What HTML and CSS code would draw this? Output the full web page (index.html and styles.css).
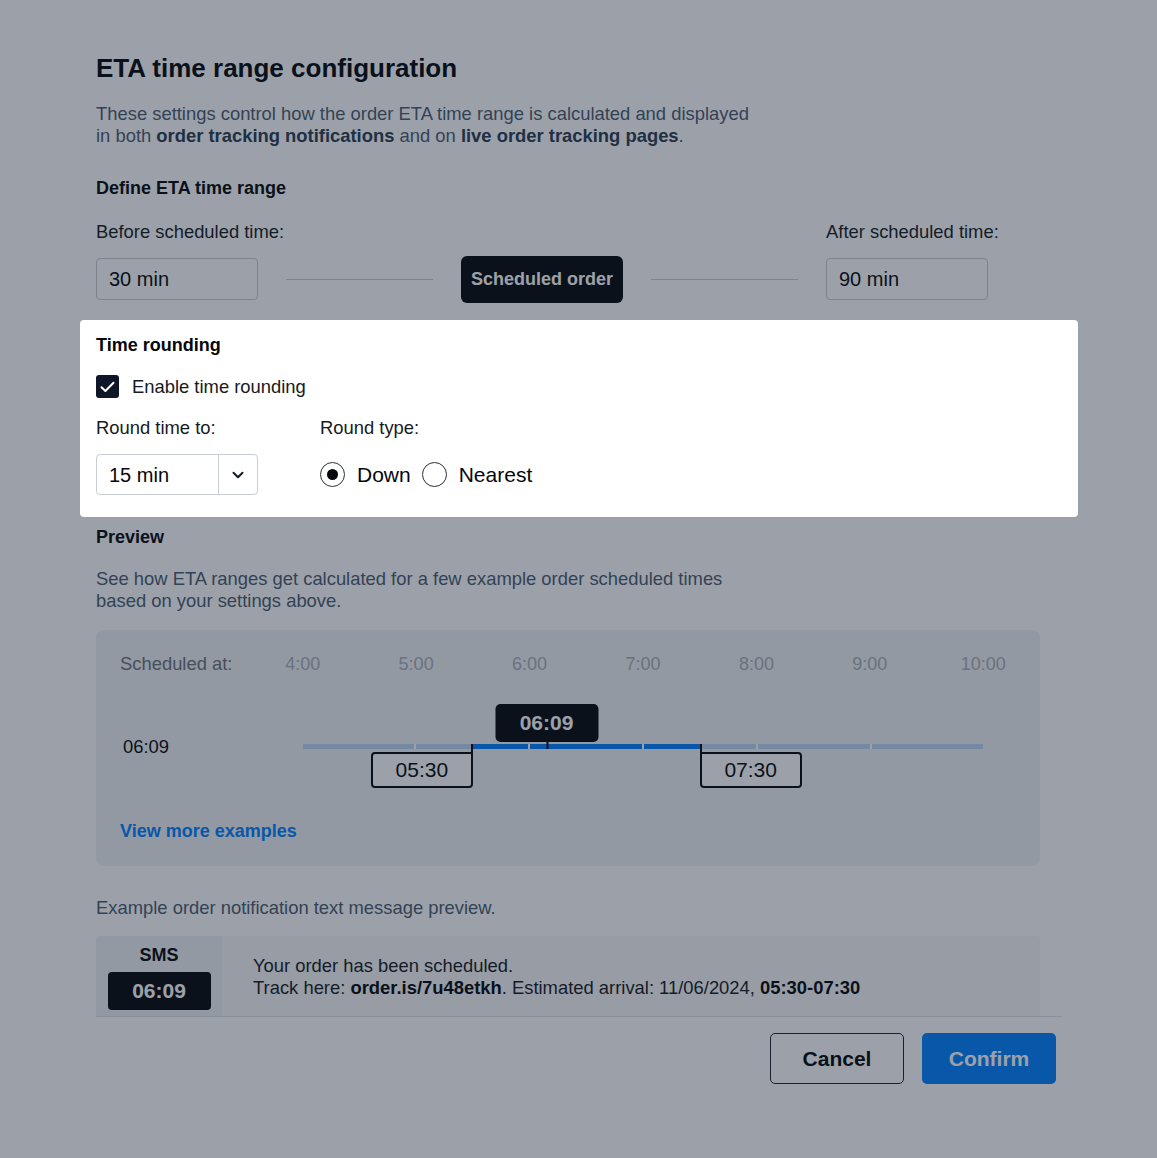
FILE: index.html
```html
<!DOCTYPE html>
<html lang="en">
<head>
  <meta charset="UTF-8" />
  <meta name="viewport" content="width=device-width, initial-scale=1.0" />
  <title>ETA time range configuration</title>
  <link rel="stylesheet" href="styles.css">
</head>
<body>
  <div class="modal">
    <h1 class="modal-title">ETA time range configuration</h1>
    <p class="intro">
      These settings control how the order ETA time range is calculated and displayed<br>
      in both <strong>order tracking notifications</strong> and on <strong>live order tracking pages</strong>.
    </p>

    <section class="range">
      <h2 class="section-title">Define ETA time range</h2>
      <div class="range-row">
        <div class="field">
          <label class="label" for="before">Before scheduled time:</label>
          <input class="text-input" id="before" type="text" value="30 min" />
        </div>
        <div class="range-link">
          <span class="rule"></span>
          <span class="anchor">Scheduled order</span>
          <span class="rule"></span>
        </div>
        <div class="field">
          <label class="label" for="after">After scheduled time:</label>
          <input class="text-input" id="after" type="text" value="90 min" />
        </div>
      </div>
    </section>

    <section class="rounding">
      <h2 class="section-title">Time rounding</h2>
      <label class="check">
        <span class="check-box">
          <svg width="15" height="12" viewBox="0 0 15 12"><path d="M1.5 6.2 5.4 10 13.5 1.8" fill="none" stroke="#fff" stroke-width="2" stroke-linecap="round" stroke-linejoin="round"/></svg>
        </span>
        Enable time rounding
      </label>
      <div class="rounding-row">
        <div class="field">
          <span class="label">Round time to:</span>
          <div class="select">
            <span class="select-value">15 min</span>
            <span class="select-caret">
              <svg width="12" height="8" viewBox="0 0 12 8"><path d="M1.5 1.8 6 6.2 10.5 1.8" fill="none" stroke="#111827" stroke-width="2" stroke-linecap="round" stroke-linejoin="round"/></svg>
            </span>
          </div>
        </div>
        <div class="field field-wide">
          <span class="label">Round type:</span>
          <div class="radios">
            <label class="radio"><span class="radio-dot is-on"></span>Down</label>
            <label class="radio"><span class="radio-dot"></span>Nearest</label>
          </div>
        </div>
      </div>
    </section>

    <section class="preview">
      <h2 class="section-title">Preview</h2>
      <p class="hint">
        See how ETA ranges get calculated for a few example order scheduled times<br>
        based on your settings above.
      </p>

      <div class="timeline-card">
        <div class="timeline-grid">
          <span class="timeline-label">Scheduled at:</span>
          <span class="hour">4:00</span>
          <span class="hour">5:00</span>
          <span class="hour">6:00</span>
          <span class="hour">7:00</span>
          <span class="hour">8:00</span>
          <span class="hour">9:00</span>
          <span class="hour">10:00</span>

          <span class="row-time">06:09</span>
          <div class="track-cell">
            <div class="track">
              <span class="seg"></span>
              <span class="seg seg-start"></span>
              <span class="seg seg-on"></span>
              <span class="seg seg-end"></span>
              <span class="seg"></span>
              <span class="seg"></span>

              <span class="marker marker-now" style="left: 35.83%">06:09</span>
              <span class="marker marker-from" style="right: 75%">05:30</span>
              <span class="marker marker-to" style="left: 58.33%">07:30</span>
            </div>
          </div>
        </div>
        <a class="more-link" href="#">View more examples</a>
      </div>

      <p class="hint sms-hint">Example order notification text message preview.</p>
      <div class="sms">
        <div class="sms-side">
          <span class="sms-tag">SMS</span>
          <span class="sms-time">06:09</span>
        </div>
        <div class="sms-body">
          <p>Your order has been scheduled.</p>
          <p>Track here: <strong>order.is/7u48etkh</strong>. Estimated arrival: 11/06/2024, <strong>05:30-07:30</strong></p>
        </div>
      </div>
    </section>

    <footer class="modal-footer">
      <button class="btn btn-ghost">Cancel</button>
      <button class="btn btn-primary">Confirm</button>
    </footer>
  </div>
</body>
</html>
```

FILE: styles.css
```css
:root {
  --ink: #05070c;
  --ink-soft: #161a22;
  --slate: #4b5c70;
  --slate-strong: #2a3c52;
  --muted: #6b717b;
  --faint: #a9aeb6;
  --line: #c8cdd5;
  --blue: #0080ff;
  --blue-light: #bcd6f4;
  --panel: #f0f1f3;
  --dim: rgba(20, 30, 50, 0.42);
}

* {
  box-sizing: border-box;
  margin: 0;
  padding: 0;
}

body {
  font-family: 'Liberation Sans', Arial, sans-serif;
  font-size: 18.4px;
  line-height: 22px;
  color: var(--ink);
  background: #fff;
}

.modal {
  width: 1157px;
  min-height: 1158px;
  padding: 52px 95px 0 96px;
}

.modal-title {
  font-size: 26px;
  line-height: 32px;
  font-weight: bold;
}

.intro {
  margin-top: 19px;
  color: var(--slate);
}

.intro strong {
  color: var(--slate-strong);
}

.section-title {
  font-size: 18px;
  line-height: 22px;
  font-weight: bold;
}

.range {
  margin-top: 30px;
}

.label {
  display: block;
  color: var(--ink-soft);
  margin-bottom: 15px;
  white-space: nowrap;
}

.range-row {
  display: flex;
  align-items: flex-end;
  gap: 28px;
  width: 892px;
  margin-top: 22px;
}

.field {
  display: flex;
  flex-direction: column;
  width: 162px;
  flex-shrink: 0;
}

.field-wide {
  width: auto;
}

.text-input {
  width: 162px;
  height: 42px;
  padding: 0 12px;
  font: inherit;
  font-size: 20px;
  color: var(--ink);
  border: 1px solid var(--line);
  border-radius: 4px;
  background: #fff;
}

.range-link {
  flex: 1;
  height: 42px;
  display: flex;
  align-items: center;
  gap: 28px;
}

.rule {
  flex: 1;
  height: 1px;
  background: var(--line);
}

.anchor {
  display: flex;
  align-items: center;
  height: 47px;
  padding: 0 10px;
  background: var(--ink);
  color: #fff;
  font-size: 18px;
  font-weight: bold;
  border-radius: 6px;
}

/* highlighted step, the rest of the dialog sits under the dim layer */
.rounding {
  position: relative;
  z-index: 1;
  margin: 20px -16px 0;
  padding: 14px 16px 22px;
  background: #fff;
  border-radius: 4px;
  box-shadow: 0 0 0 2400px var(--dim);
}

.check {
  display: flex;
  align-items: center;
  gap: 13px;
  margin-top: 19px;
  color: var(--ink-soft);
}

.check-box {
  width: 23px;
  height: 23px;
  border-radius: 3px;
  background: #0f1628;
  display: flex;
  align-items: center;
  justify-content: center;
}

.rounding-row {
  display: flex;
  gap: 62px;
  margin-top: 19px;
}

.select {
  display: flex;
  width: 162px;
  height: 41px;
  border: 1px solid var(--line);
  border-radius: 4px;
}

.select-value {
  flex: 1;
  display: flex;
  align-items: center;
  padding-left: 12px;
  font-size: 20px;
}

.select-caret {
  width: 39px;
  display: flex;
  align-items: center;
  justify-content: center;
  border-left: 1px solid var(--line);
}

.radios {
  display: flex;
  align-items: center;
  gap: 11px;
  height: 41px;
}

.radio {
  display: flex;
  align-items: center;
  gap: 12px;
  font-size: 21px;
}

.radio-dot {
  width: 25px;
  height: 25px;
  border: 1.5px solid #2b303a;
  border-radius: 50%;
  display: flex;
  align-items: center;
  justify-content: center;
}

.radio-dot.is-on::after {
  content: '';
  width: 11px;
  height: 11px;
  border-radius: 50%;
  background: var(--ink);
}

.preview {
  margin-top: 9px;
}

.hint {
  margin-top: 20px;
  color: var(--slate);
}

.timeline-card {
  width: 944px;
  margin-top: 18px;
  padding: 23px 0 24px 24px;
  background: var(--panel);
  border-radius: 8px;
}

.timeline-grid {
  display: grid;
  grid-template-columns: 126px repeat(7, 1fr);
  grid-template-rows: 22px 144px;
  align-items: center;
}

.timeline-label {
  color: var(--muted);
}

.hour {
  text-align: center;
  color: var(--faint);
  font-size: 18px;
}

.row-time {
  padding-left: 3px;
}

.track-cell {
  grid-column: 2 / -1;
  padding: 0 calc(100% / 14);
}

.track {
  position: relative;
  display: flex;
  gap: 2px;
  height: 5px;
  margin-top: -1px;
  background: #fff;
}

.seg {
  flex: 1;
  background: var(--blue-light);
}

.seg-on {
  background: var(--blue);
}

.seg-start {
  background: linear-gradient(to right, var(--blue-light) 50%, var(--blue) 50%);
}

.seg-end {
  background: linear-gradient(to right, var(--blue) 50%, var(--blue-light) 50%);
}

.marker {
  position: absolute;
  display: flex;
  align-items: center;
  justify-content: center;
  width: 102px;
  font-size: 21px;
}

.marker::after {
  content: '';
  position: absolute;
  width: 2px;
  background: var(--ink);
}

.marker-now {
  bottom: 7px;
  height: 38px;
  width: 103px;
  transform: translateX(-50%);
  background: var(--ink);
  color: #fff;
  font-weight: bold;
  border-radius: 5px;
}

.marker-now::after {
  top: 100%;
  left: 50%;
  height: 7px;
}

.marker-from,
.marker-to {
  top: 8px;
  height: 36px;
  background: #fff;
  border: 2px solid var(--ink);
  border-radius: 4px;
}

.marker-from {
  border-top-right-radius: 0;
}

.marker-from::after {
  right: -2px;
  top: -10px;
  height: 10px;
}

.marker-to {
  border-top-left-radius: 0;
}

.marker-to::after {
  left: -2px;
  top: -10px;
  height: 10px;
}

.more-link {
  display: inline-block;
  margin-top: 1px;
  color: var(--blue);
  font-size: 18px;
  font-weight: bold;
  text-decoration: none;
}

.sms-hint {
  margin-top: 31px;
}

.sms {
  display: flex;
  width: 944px;
  height: 80px;
  margin-top: 17px;
  background: #f6f7f8;
  border-radius: 4px 4px 0 0;
  overflow: hidden;
}

.sms-side {
  width: 126px;
  display: flex;
  flex-direction: column;
  align-items: center;
  gap: 6px;
  padding-top: 8px;
  background: var(--panel);
}

.sms-tag {
  font-size: 18px;
  font-weight: bold;
}

.sms-time {
  display: flex;
  align-items: center;
  justify-content: center;
  width: 103px;
  height: 38px;
  background: var(--ink);
  color: #fff;
  font-size: 21px;
  font-weight: bold;
  border-radius: 4px;
}

.sms-body {
  display: flex;
  flex-direction: column;
  justify-content: center;
  padding: 1px 0 0 31px;
  color: var(--ink-soft);
}

.sms-body strong {
  color: var(--ink);
}

.modal-footer {
  display: flex;
  justify-content: flex-end;
  gap: 18px;
  padding: 16px 6px 0 0;
  border-top: 1px solid #dfe2e6;
}

.btn {
  width: 134px;
  height: 51px;
  font-family: inherit;
  font-size: 21px;
  font-weight: bold;
  border-radius: 5px;
  cursor: pointer;
}

.btn-ghost {
  background: #fff;
  color: var(--ink);
  border: 1.5px solid #1f232b;
}

.btn-primary {
  background: var(--blue);
  color: #fff;
  border: none;
}
```
